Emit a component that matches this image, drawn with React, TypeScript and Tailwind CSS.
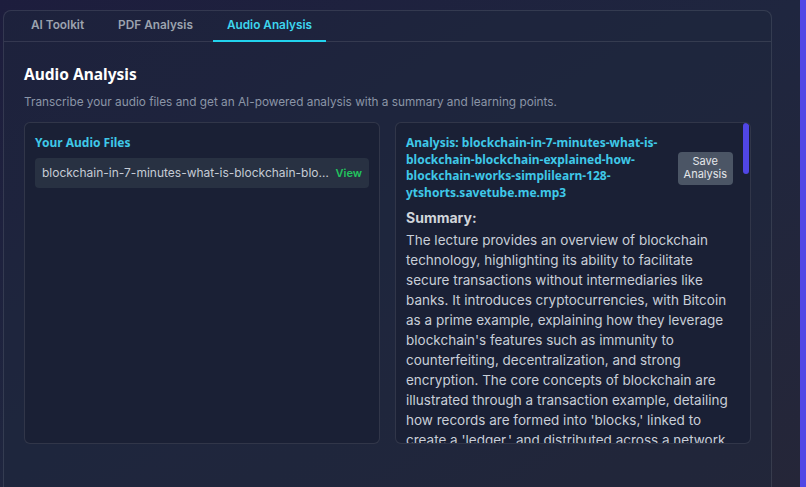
import React, { useState } from 'react'

const tabs = ['AI Toolkit', 'PDF Analysis', 'Audio Analysis']

const fileName =
  'blockchain-in-7-minutes-what-is-blockchain-blockchain-explained-how-blockchain-works-simplilearn-128-ytshorts.savetube.me.mp3'

const summary =
  "The lecture provides an overview of blockchain technology, highlighting its ability to facilitate secure transactions without intermediaries like banks. It introduces cryptocurrencies, with Bitcoin as a prime example, explaining how they leverage blockchain's features such as immunity to counterfeiting, decentralization, and strong encryption. The core concepts of blockchain are illustrated through a transaction example, detailing how records are formed into 'blocks,' linked to create a 'ledger.' and distributed across a network."

const heading = { fontFamily: '"Noto Sans", "DejaVu Sans", sans-serif' }
const body = { fontFamily: 'Inter, "Noto Sans", sans-serif' }

export default function App() {
  const [active, setActive] = useState('Audio Analysis')

  return (
    <div
      className="flex h-[487px] w-full overflow-hidden bg-gradient-to-br from-[#1d1d3d] via-[#1f263f] to-[#252638]"
      style={body}
    >
      <div className="min-w-0 flex-1 pl-[3px] pr-[28px] pt-[10px]">
        <div className="h-[520px] rounded-lg border border-white/10 bg-[#1e293b]/40">
          {/* Tabs */}
          <div className="flex h-[31px] gap-[6px] border-b border-white/10 pl-[13px]">
            {tabs.map((t) => (
              <button
                key={t}
                onClick={() => setActive(t)}
                className={
                  'h-[31px] border-b-2 px-[14px] text-[11.8px] font-semibold ' +
                  (active === t
                    ? 'border-[#22d3ee] text-[#3dd6ee]'
                    : 'border-transparent text-[#9ca3af]')
                }
              >
                {t}
              </button>
            ))}
          </div>

          <div className="px-5 pt-5">
            <h2 className="text-[15.5px] font-bold leading-6 text-white" style={heading}>
              Audio Analysis
            </h2>
            <p className="mt-[7px] text-[11.8px] leading-[18px] text-[#8b95a7]">
              Transcribe your audio files and get an AI-powered analysis with a summary and learning points.
            </p>

            <div className="mt-[11px] grid h-[322px] grid-cols-2 gap-[15px]">
              {/* Files */}
              <div className="rounded-md border border-white/10 bg-[#1a2035] p-2.5">
                <h3 className="text-[12px] font-bold leading-5 text-[#3fc8e8]" style={heading}>
                  Your Audio Files
                </h3>
                <div className="mt-[5px] flex h-[30px] items-center gap-1 rounded bg-[#283142] px-[7px]">
                  <span className="min-w-0 flex-1 truncate text-[12px] text-[#c5cbd5]">{fileName}</span>
                  <button className="text-[11px] font-semibold text-[#22c55e]">View</button>
                </div>
              </div>

              {/* Analysis */}
              <div className="relative overflow-hidden rounded-md border border-white/10 bg-[#1a2035]">
                <div className="h-full overflow-y-auto pb-2.5 pl-2.5 pr-4 pt-3 [&::-webkit-scrollbar]:hidden">
                  <div className="flex items-center gap-3">
                    <h3
                      className="min-w-0 flex-1 break-words text-[12px] font-bold leading-[16.7px] text-[#3fc8e8]"
                      style={heading}
                    >
                      Analysis: {fileName}
                    </h3>
                    <button className="mr-[1px] rounded bg-[#4b5565] px-[6px] py-[3px] text-[11px] leading-[13.5px] text-[#e5e7eb]">
                      Save
                      <br />
                      Analysis
                    </button>
                  </div>
                  <h4 className="mt-[6px] text-[14px] font-bold leading-5 text-[#d1d5db]">Summary:</h4>
                  <p className="mt-[2px] text-[13.5px] leading-5 text-[#c8ced8]">{summary}</p>
                  <h4 className="mt-3 text-[14px] font-bold leading-5 text-[#d1d5db]">Learning Points:</h4>
                  <ul className="list-disc pl-5 text-[13.5px] leading-5 text-[#c8ced8]">
                    <li>Blockchain removes the need for trusted intermediaries.</li>
                    <li>Blocks are linked together to form a shared ledger.</li>
                    <li>Decentralization and encryption make records hard to tamper with.</li>
                  </ul>
                </div>
                <div className="absolute right-[1px] top-0 h-[51px] w-[6px] rounded-full bg-[#5046e5]" />
              </div>
            </div>
          </div>
        </div>
      </div>
      <div className="w-[6px] shrink-0 bg-[#5046e5]" />
    </div>
  )
}
